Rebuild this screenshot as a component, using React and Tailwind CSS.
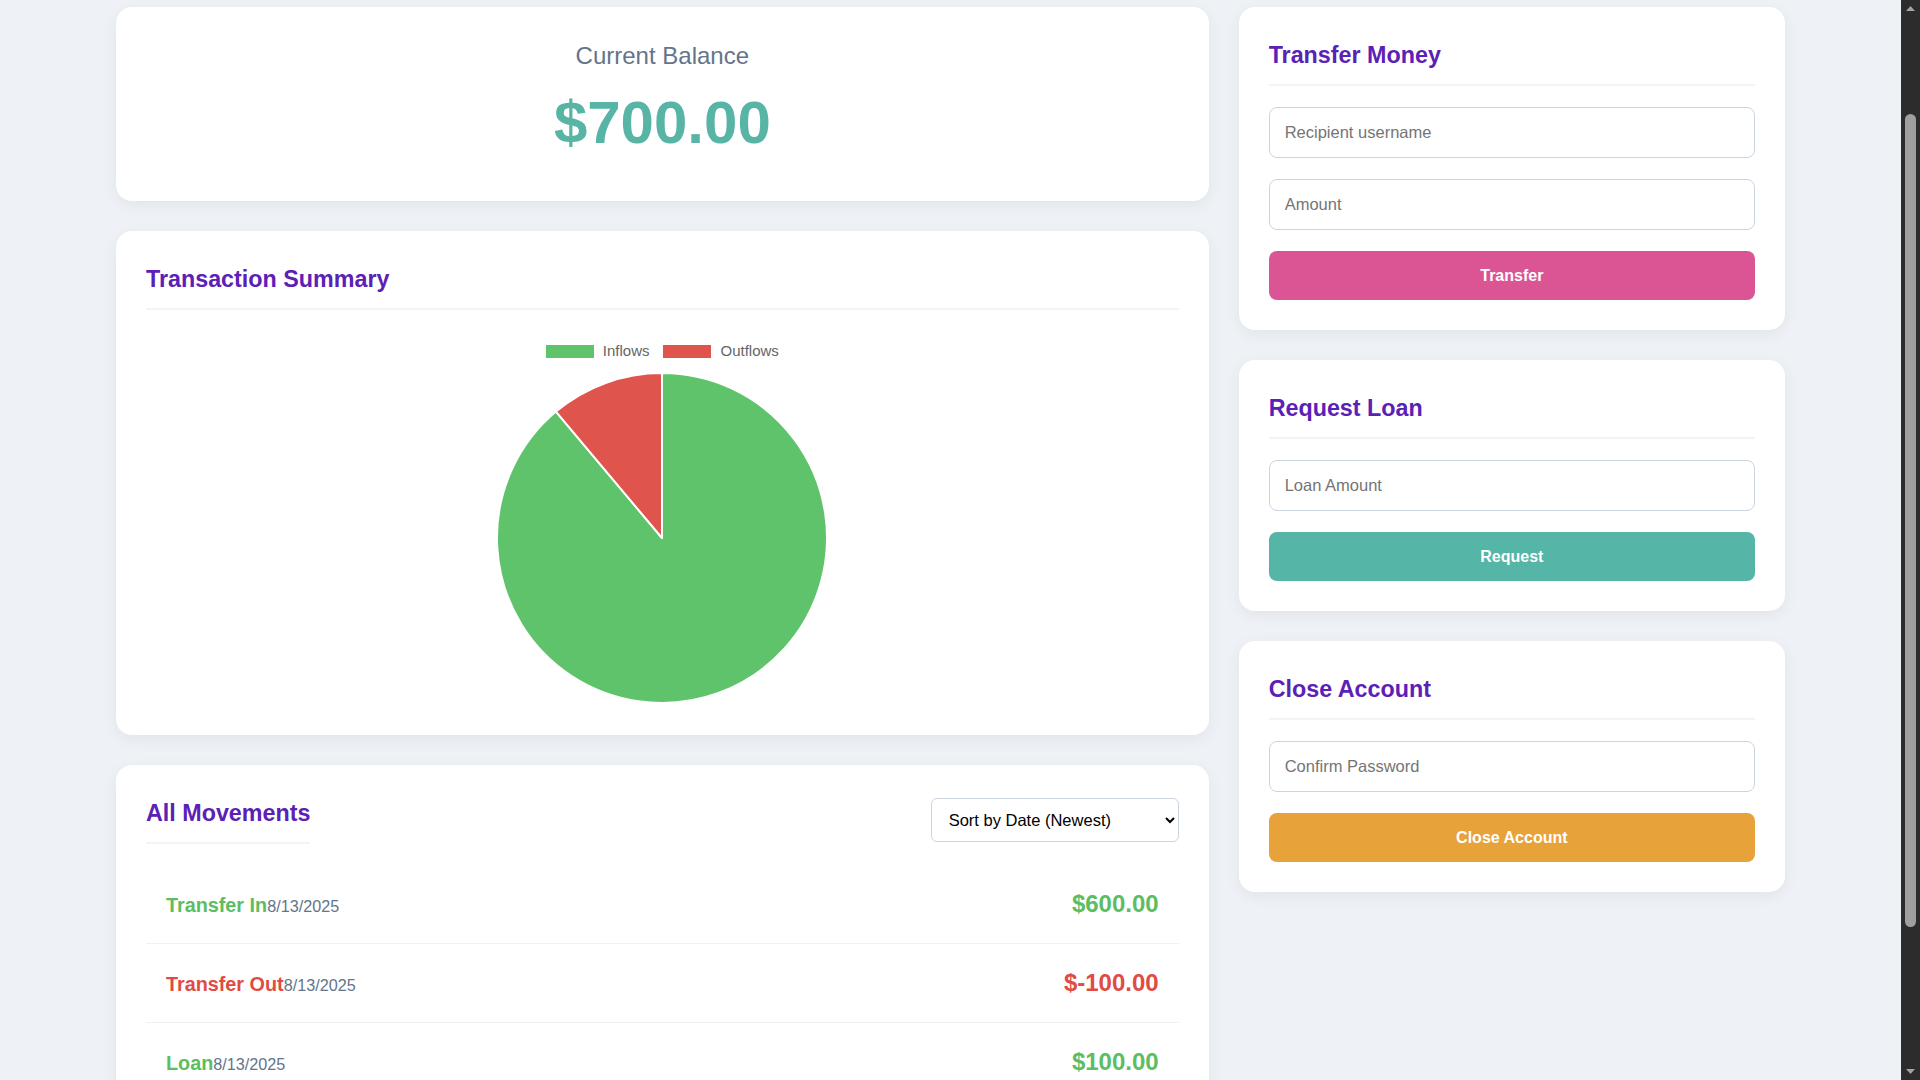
import React from 'react';

const movements = [
  { label: 'Transfer In', date: '8/13/2025', amount: '$600.00', positive: true },
  { label: 'Transfer Out', date: '8/13/2025', amount: '$-100.00', positive: false },
  { label: 'Loan', date: '8/13/2025', amount: '$100.00', positive: true },
];

const Card = ({ children, className = '' }) => (
  <div className={`bg-white rounded-2xl p-[30px] shadow-[0_4px_16px_rgba(15,23,42,0.06)] ${className}`}>
    {children}
  </div>
);

const Title = ({ children, className = '' }) => (
  <h2 className={`text-[23.3px] leading-[36px] font-bold text-[#5b21b6] pb-[11px] border-b-2 border-[#f1f5f9] ${className}`}>
    {children}
  </h2>
);

const Field = ({ placeholder, type = 'text' }) => (
  <input
    type={type}
    placeholder={placeholder}
    className="w-full h-[51px] px-[15px] rounded-lg border border-[#cbd5e1] bg-white text-[16.5px] text-[#1f2937] placeholder:text-[#757575] outline-none"
  />
);

const ActionButton = ({ children, color }) => (
  <button className={`w-full h-[49px] rounded-lg text-white text-[16px] font-bold ${color}`}>
    {children}
  </button>
);

// pie: inflows 800, outflows 100 -> red slice spans the last 40deg before 12 o'clock
const PieChart = () => (
  <svg width="334" height="334" viewBox="-2 -2 334 334">
    <path d="M165 165 L165 0 A165 165 0 1 1 58.94 38.6 Z" fill="#5ec36a" stroke="#fff" strokeWidth="2" strokeLinejoin="round" />
    <path d="M165 165 L58.94 38.6 A165 165 0 0 1 165 0 Z" fill="#e0544e" stroke="#fff" strokeWidth="2" strokeLinejoin="round" />
  </svg>
);

// dark window scrollbar seen on the right edge of the screenshot
const ScrollTrack = () => (
  <aside className="w-[19px] shrink-0 bg-[#2c2c2c] flex flex-col items-center">
    <svg width="9" height="5" viewBox="0 0 9 5" className="mt-[6px]">
      <path d="M0 5 L4.5 0 L9 5 Z" fill="#a3a3a3" />
    </svg>
    <div className="mt-[103px] w-[11px] h-[813px] rounded-full bg-[#9f9f9f]"></div>
    <div className="flex-1"></div>
    <svg width="9" height="5" viewBox="0 0 9 5" className="mb-[6px]">
      <path d="M0 0 L9 0 L4.5 5 Z" fill="#a3a3a3" />
    </svg>
  </aside>
);

export default function App() {
  return (
    <div className="flex h-screen bg-[#eef2f6] font-['Liberation_Sans',Arial,sans-serif] text-[#1f2937]">
      <main className="flex-1 min-w-0 overflow-hidden pt-[7px] pb-[30px]">
        <div className="max-w-[1669px] mx-auto grid grid-cols-[2fr_1fr] gap-[30px] items-start">

          {/* Left column */}
          <div className="flex flex-col gap-[30px]">
            <Card className="text-center">
              <p className="mt-[1px] text-[24px] leading-[36px] text-[#64748b]">Current Balance</p>
              <p className="mt-[13px] mb-[12px] text-[60px] leading-[72px] font-bold text-[#58b5a6]">$700.00</p>
            </Card>

            <Card>
              <Title>Transaction Summary</Title>
              <div className="mt-[31px] h-[20px] flex justify-center items-center text-[15px] text-[#666]">
                <span className="w-[48px] h-[13px] bg-[#5ec36a]"></span>
                <span className="ml-[9px]">Inflows</span>
                <span className="ml-[14px] w-[48px] h-[13px] bg-[#e0544e]"></span>
                <span className="ml-[9px]">Outflows</span>
              </div>
              <div className="mt-[10px] flex justify-center">
                <PieChart />
              </div>
            </Card>

            <Card>
              <div className="flex justify-between items-center mb-[21px]">
                <Title>All Movements</Title>
                <select className="w-[248px] h-[44px] rounded-md border border-[#cbd5e1] bg-white px-[13px] text-[16.5px] text-black outline-none">
                  <option>Sort by Date (Newest)</option>
                  <option>Sort by Date (Oldest)</option>
                  <option>Sort by Amount</option>
                </select>
              </div>
              <ul>
                {movements.map((m, i) => (
                  <li key={i} className="h-[79px] flex justify-between items-baseline px-[20px] pt-[25px] border-b border-[#eef1f5]">
                    <div className="leading-[28px]">
                      <span className={`text-[19.8px] font-bold ${m.positive ? 'text-[#5cbd62]' : 'text-[#e04b44]'}`}>{m.label}</span>
                      <span className="text-[16.2px] text-[#64748b]">{m.date}</span>
                    </div>
                    <span className={`text-[24px] leading-[28px] font-bold ${m.positive ? 'text-[#5cbd62]' : 'text-[#e04b44]'}`}>
                      {m.amount}
                    </span>
                  </li>
                ))}
              </ul>
            </Card>
          </div>

          {/* Right column */}
          <div className="flex flex-col gap-[30px]">
            <Card>
              <Title className="mb-[21px]">Transfer Money</Title>
              <div className="flex flex-col gap-[21px]">
                <Field placeholder="Recipient username" />
                <Field placeholder="Amount" type="number" />
                <ActionButton color="bg-[#db5494]">Transfer</ActionButton>
              </div>
            </Card>

            <Card>
              <Title className="mb-[21px]">Request Loan</Title>
              <div className="flex flex-col gap-[21px]">
                <Field placeholder="Loan Amount" type="number" />
                <ActionButton color="bg-[#55b5a6]">Request</ActionButton>
              </div>
            </Card>

            <Card>
              <Title className="mb-[21px]">Close Account</Title>
              <div className="flex flex-col gap-[21px]">
                <Field placeholder="Confirm Password" type="password" />
                <ActionButton color="bg-[#e8a23a]">Close Account</ActionButton>
              </div>
            </Card>
          </div>
        </div>
      </main>
      <ScrollTrack />
    </div>
  );
}
